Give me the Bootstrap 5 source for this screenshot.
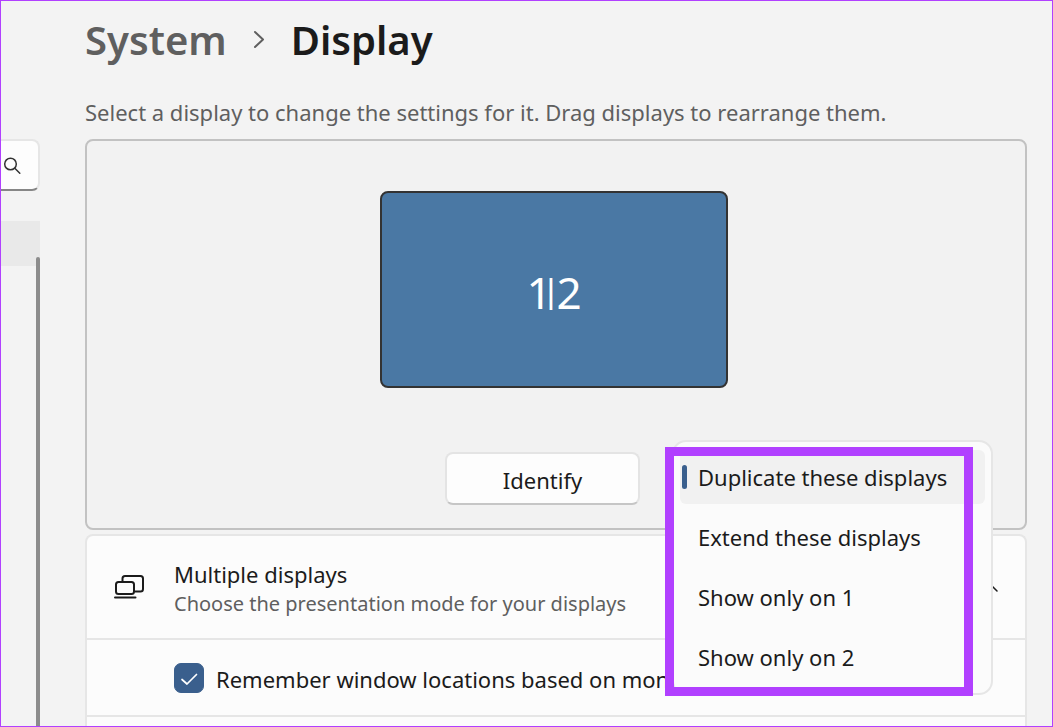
<!DOCTYPE html>
<html lang="en">
<head>
<meta charset="utf-8">
<meta name="viewport" content="width=device-width, initial-scale=1">
<title>System &gt; Display</title>
<link href="https://cdn.jsdelivr.net/npm/bootstrap@5.3.0/dist/css/bootstrap.min.css" rel="stylesheet">
<style>
  body { font-family: "Noto Sans", "Open Sans", sans-serif; font-size: 22px; line-height: 30px; color: #1b1b1b; background: #f3f3f3; border: 1px solid #b140ff; }
  .text-soft { color: #5f5f5f; }
  .side-pane { width: 39px; padding-top: 138px; }
  .search-box { height: 52px; padding-top: 2px; background: #fdfdfd; border: 2px solid #e6e6e6; border-left: 0; border-bottom-color: #868686; border-radius: 0 8px 8px 0; }
  .search-box svg { margin-left: 2px; }
  .side-item { height: 45px; margin-top: 30px; background: #e9e9e9; }
  .side-scroll { width: 4px; margin-top: -9px; background: #8c8c8c; border-radius: 2px 2px 0 0; }
  .main-pane { min-width: 0; padding: 13px 25px 0 45px; }
  .crumbs { font-size: 40px; line-height: 52px; font-weight: 600; gap: 25px; }
  .crumbs a, .crumbs h1 { font-size: inherit; line-height: inherit; font-weight: inherit; }
  .hint { margin-top: 31px; margin-bottom: 12px; }
  .arrange { background: #f2f2f2; border: 2px solid #c2c2c2; border-radius: 8px; padding: 50px 32px 23px 28px; }
  .monitor { width: 348px; height: 197px; padding-top: 4px; font-size: 44px; color: #fff; background: #4a78a4; border: 2px solid #333; border-radius: 8px; }
  .split { font-family: "DejaVu Sans", sans-serif; font-size: 32px; line-height: 30px; margin: 0 0 0 -6px; vertical-align: 7px; }
  .actions { margin-top: 64px; gap: 32px; }
  .btn-plain { width: 195px; height: 53px; font-size: 22px; background: #fdfdfd; border: 2px solid #e4e4e4; border-bottom-color: #c6c6c6; border-radius: 8px; color: #1b1b1b; }
  .mode { width: 321px; height: 53px; }
  .mode-btn { border: 2px solid #dcdcdc; background: #fdfdfd; border-radius: 8px; }
  .mode-menu { top: -12px; left: 0; z-index: 5; padding: 8px 6px 9px; background: #fbfbfb; border: 2px solid #e6e6e6; border-radius: 14px; }
  .mode-menu li + li { margin-top: 6px; }
  .mode-item { height: 54px; padding: 0 0 0 18px; border: 0; border-radius: 6px; background: none; color: #1b1b1b; text-align: left; }
  .mode-item.picked { background: #f1f1f1; }
  .mode-item.picked::before { content: ""; position: absolute; left: 2px; top: 15px; width: 5px; height: 24px; border-radius: 3px; background: #3a5f8d; }
  .highlight { top: -5px; left: -7px; width: 308px; height: 249px; z-index: 6; border: 9px solid #b140ff; pointer-events: none; }
  .settings { margin-top: 4px; background: #fcfcfc; border: 2px solid #e6e6e6; border-bottom: 0; border-radius: 8px 8px 0 0; }
  .group-head { height: 102px; padding: 0 25px 0 27px; }
  .group-head .labels { margin-left: 30px; padding-top: 4px; }
  .sub { font-size: 20px; }
  .group-row { border-top: 2px solid #e6e6e6; padding-left: 87px; gap: 12px; }
  .group-row.remember { height: 77px; }
  .group-row label { padding-top: 2px; }
  .form-check-input.tick { width: 30px; height: 30px; border-radius: 7px; margin: 0; }
  .form-check-input.tick:checked { border-color: #3a5f8d; background-color: #3a5f8d; background-size: 30px; background-image: url("data:image/svg+xml,%3csvg xmlns='http://www.w3.org/2000/svg' viewBox='0 0 30 30'%3e%3cpath fill='none' stroke='%23fff' stroke-width='1.7' stroke-linecap='round' stroke-linejoin='round' d='M8 16.5l5 4.5L22.500 11.500'/%3e%3c/svg%3e"); }
</style>
</head>
<body class="d-flex vh-100 overflow-hidden">
  <aside class="side-pane d-flex flex-column flex-shrink-0">
    <div class="search-box d-flex align-items-center flex-shrink-0">
      <svg width="20" height="20" viewBox="0 0 20 20" fill="none" stroke="#333" stroke-width="1.500" stroke-linecap="round" aria-label="Search"><circle cx="7.500" cy="8" r="5.800"/><path d="M11.800 12.200l5 5"/></svg>
    </div>
    <div class="side-item flex-shrink-0"></div>
    <div class="side-scroll align-self-end flex-grow-1"></div>
  </aside>

  <main class="main-pane d-flex flex-column flex-grow-1">
    <nav class="crumbs d-flex align-items-center">
      <a href="#" class="text-soft text-decoration-none">System</a>
      <svg width="14" height="20" viewBox="0 0 14 20" fill="none" stroke="#5f5f5f" stroke-width="2" stroke-linecap="round" stroke-linejoin="round"><path d="M3 2l8 7.500L3 17"/></svg>
      <h1 class="m-0">Display</h1>
    </nav>
    <p class="hint text-soft text-nowrap">Select a display to change the settings for it. Drag displays to rearrange them.</p>

    <section class="arrange">
      <div class="monitor d-flex align-items-center justify-content-center mx-auto"><div>1<span class="split">|</span>2</div></div>
      <div class="actions d-flex justify-content-end">
        <button type="button" class="btn btn-plain p-0 pt-1">Identify</button>
        <div class="mode position-relative">
          <button type="button" class="mode-btn w-100 h-100" aria-label="Display mode"></button>
          <ul class="mode-menu list-unstyled position-absolute w-100 m-0">
            <li><button type="button" class="mode-item picked position-relative w-100">Duplicate these displays</button></li>
            <li><button type="button" class="mode-item w-100">Extend these displays</button></li>
            <li><button type="button" class="mode-item w-100">Show only on 1</button></li>
            <li><button type="button" class="mode-item w-100">Show only on 2</button></li>
          </ul>
          <div class="highlight position-absolute"></div>
        </div>
      </div>
    </section>

    <section class="settings d-flex flex-column flex-grow-1">
      <div class="group-head d-flex align-items-center">
        <svg width="30" height="26" viewBox="0 0 30 26" fill="none" stroke="#1b1b1b" stroke-width="2" stroke-linecap="round" stroke-linejoin="round"><rect x="2" y="8" width="18" height="12" rx="2.500"/><path d="M8.500 7V4.500a2.500 2.500 0 0 1 2.500-2.500h15.500a2.500 2.500 0 0 1 2.500 2.500v10.500a2.500 2.500 0 0 1-2.500 2.500H21"/><path d="M1 23.500h20.500"/></svg>
        <div class="labels flex-grow-1">
          <div>Multiple displays</div>
          <div class="sub text-soft">Choose the presentation mode for your displays</div>
        </div>
        <svg width="18" height="12" viewBox="0 0 18 12" fill="none" stroke="#1b1b1b" stroke-width="1.500" stroke-linecap="round"><path d="M1 10l7-7 7 7"/></svg>
      </div>
      <div class="group-row remember d-flex align-items-center">
        <input class="form-check-input tick flex-shrink-0" type="checkbox" id="remember" checked>
        <label class="text-nowrap" for="remember">Remember window locations based on mon</label>
      </div>
      <div class="group-row flex-grow-1"></div>
    </section>
  </main>
<script src="https://cdn.jsdelivr.net/npm/bootstrap@5.3.0/dist/js/bootstrap.bundle.min.js"></script>
</body>
</html>
